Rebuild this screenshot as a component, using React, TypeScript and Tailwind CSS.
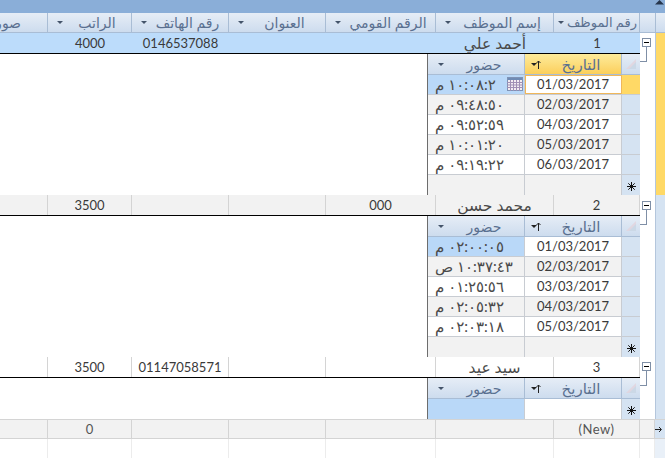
import React from "react";

const hdrCols: [number, string, boolean][] = [
  [48, "صورة", false],
  [84, "الراتب", true],
  [97, "رقم الهاتف", true],
  [97, "العنوان", true],
  [110, "الرقم القومي", true],
  [118, "إسم الموظف", true],
  [86, "رقم الموظف", true],
];

function Arrow() {
  return <span className="shrink-0 w-0 h-0 ml-[4px] border-x-[3px] border-x-transparent border-t-[3px] border-t-[#44546a]" />;
}

function SortArrow() {
  return (
    <svg width="10" height="9" viewBox="0 0 10 9" className="shrink-0 ml-[2px]">
      <path d="M0 3H6L3 6Z" fill="#222" />
      <path d="M7.5 9V1M5.5 3L7.5 1L9.5 3" fill="none" stroke="#222" />
    </svg>
  );
}

function Star() {
  return (
    <svg width="9" height="9" viewBox="0 0 9 9">
      <path d="M4.5 0V9M0 4.5H9M1.3 1.3L7.7 7.7M7.7 1.3L1.3 7.7" stroke="#111" strokeWidth="1" fill="none" />
    </svg>
  );
}

function Expander({ top }: { top: number }) {
  return (
    <div className="absolute left-[642px] w-[13px] h-[26px] pointer-events-none" style={{ top }}>
      <div className="absolute left-0 top-0 w-[9px] h-[9px] border border-[#7f8fa6] bg-white flex items-center justify-center">
        <span className="w-[5px] h-px bg-black" />
      </div>
      <div className="absolute left-[4px] top-[9px] w-px h-[15px] bg-[#7f8fa6]" />
      <div className="absolute left-[-2px] top-[23px] w-[7px] h-px bg-[#7f8fa6]" />
    </div>
  );
}

function MainRow({ id, name, nid, phone, sal, tone, selected }: { id: string; name: string; nid: string; phone: string; sal: string; tone: string; selected?: boolean }) {
  const vals = ["", sal, phone, "", nid, name, id];
  return (
    <div className="flex h-[21px] shrink-0">
      <div className={`flex flex-1 border-b border-black ${tone}`}>
        {hdrCols.map(([w], i) => (
          <div
            key={i}
            style={{ width: w }}
            className={`shrink-0 flex items-center justify-center text-[13px] leading-none text-[#3a3a3a] pt-[1px] ${selected ? "" : "border-r border-[#d4d4d4]"}`}
          >
            <span dir="auto" className={i === 5 ? "text-[15.5px] text-[#4a4a4a]" : ""}>{vals[i]}</span>
          </div>
        ))}
      </div>
      <div className="w-[15px] bg-white shrink-0" />
      <div className={`w-[10px] shrink-0 border-l border-[#b4c6dc] ${selected ? "bg-[#ffd966]" : "bg-[#d5e3f2]"}`} />
    </div>
  );
}

function SubHeader({ active }: { active: boolean }) {
  return (
    <div className="flex h-[21px] shrink-0 border-b border-[#a9bdd5]">
      <div className="w-[97px] shrink-0 flex items-center bg-gradient-to-b from-[#e6edf6] to-[#cddcee] border-r border-[#a9bdd5] pl-[6px]">
        <Arrow />
        <span className="flex-1 text-center text-[14px] text-[#5a7090]">حضور</span>
      </div>
      <div className={`w-[97px] shrink-0 flex items-center pl-[4px] border-r border-[#a9bdd5] bg-gradient-to-b ${active ? "from-[#fdeb9a] to-[#fbcf5a]" : "from-[#e6edf6] to-[#cddcee]"}`}>
        <SortArrow />
        <span className="flex-1 text-center text-[15px] text-[#5a7090]">التاريخ</span>
      </div>
      <div className="flex-1 bg-gradient-to-b from-[#e6edf6] to-[#cddcee] relative overflow-hidden">
        <svg width="19" height="20" viewBox="0 0 19 20" className="absolute inset-0">
          <polygon points="14,15 4,15 14,5" fill="#e2d3dc" opacity="0.8" />
          <polygon points="14,15 7,15 14,8" fill="#cbd8e6" />
        </svg>
      </div>
    </div>
  );
}

function Cal() {
  return (
    <svg width="16" height="14" viewBox="0 0 16 14" className="absolute right-[1px] top-[2px]">
      <rect x="0.5" y="0.5" width="15" height="13" fill="#f3ecf2" stroke="#7f93b5" />
      <rect x="1" y="1" width="14" height="2" fill="#6f8bb5" />
      <path d="M0 5.5H16M0 8H16M0 10.5H16M3.5 3V14M6.5 3V14M9.5 3V14M12.5 3V14" stroke="#a08fb5" strokeWidth="1" />
    </svg>
  );
}

function SubRow({ time, date, gray, first, current }: { time: string; date: string; gray: boolean; first: boolean; current: boolean }) {
  return (
    <div className="flex h-[20px] shrink-0 border-b border-[#c8ccd2]">
      <div className={`relative w-[97px] shrink-0 flex items-center pl-[7px] border-r border-[#c8ccd2] text-[15px] tracking-[0.9px] leading-none text-[#4a4a4a] ${first ? "bg-[#b9d8f8]" : gray ? "bg-[#f2f2f2]" : "bg-white"}`}>
        <span dir="rtl">{time}</span>
        {first && current && <Cal />}
      </div>
      <div className={`w-[97px] shrink-0 flex items-center justify-center text-[13px] leading-none text-[#3a3a3a] border-r border-[#c8ccd2] ${first && current ? "bg-white outline-1 -outline-offset-1 outline-[#f0b75a]" : first ? "bg-white" : gray ? "bg-[#f2f2f2]" : "bg-white"}`}>
        {date}
      </div>
      <div className={`flex-1 ${first && current ? "bg-[#ffd966]" : "bg-[#d5e3f2]"}`} />
    </div>
  );
}

function Sub({ rows, current, tall }: { rows: [string, string][]; current?: boolean; tall: boolean }) {
  return (
    <div className="flex shrink-0">
      <div className="flex-1 bg-white" />
      <div className={`w-[213px] shrink-0 flex flex-col border-l border-[#6d6d6d] ${tall ? "h-[141px]" : "h-[41px]"}`}>
        <SubHeader active={!!current} />
        {rows.map(([t, d], i) => (
          <SubRow key={i} time={t} date={d} gray={i % 2 === 1} first={i === 0} current={!!current} />
        ))}
        <div className="flex h-[20px] shrink-0 flex-1">
          <div className={`w-[97px] border-r border-[#c8ccd2] ${tall ? "bg-[#f2f2f2]" : "bg-[#b9d8f8]"}`} />
          <div className={`w-[97px] border-r border-[#c8ccd2] ${tall ? "bg-[#f2f2f2]" : "bg-white"}`} />
          <div className="flex-1 bg-[#d5e3f2] flex items-center justify-center pt-[2px]"><Star /></div>
        </div>
      </div>
      <div className="w-[15px] bg-white shrink-0" />
      <div className={`w-[10px] shrink-0 border-l border-[#b4c6dc] ${current ? "bg-[#ffd966]" : "bg-[#d5e3f2]"}`} />
    </div>
  );
}

const s1: [string, string][] = [
  ["١٠:٠٨:٢ م", "01/03/2017"],
  ["٠٩:٤٨:٥٠ م", "02/03/2017"],
  ["٠٩:٥٢:٥٩ م", "04/03/2017"],
  ["١٠:٠١:٢٠ م", "05/03/2017"],
  ["٠٩:١٩:٢٢ م", "06/03/2017"],
];
const s2: [string, string][] = [
  ["٠٢:٠٠:٠٥ م", "01/03/2017"],
  ["١٠:٣٧:٤٣ ص", "02/03/2017"],
  ["٠١:٢٥:٥٦ م", "03/03/2017"],
  ["٠٢:٠٥:٣٢ م", "04/03/2017"],
  ["٠٢:٠٣:١٨ م", "05/03/2017"],
];

export default function App() {
  return (
    <div className="relative w-[665px] h-[458px] overflow-hidden bg-white flex flex-col font-['Lato','DejaVu_Sans',sans-serif]">
      <div className="h-[13px] shrink-0 bg-[#8aaed8] flex justify-end items-start">
        <svg width="9" height="5" viewBox="0 0 9 5" className="mr-[1px]"><path d="M0 4.5L4.5 0L9 4.5Z" fill="#26364d" /></svg>
      </div>
      <div className="flex h-[20px] shrink-0 border-b border-[#a9bdd5]">
        <div className="flex flex-1">
          {hdrCols.map(([w, t, arrow], i) => (
            <div key={i} style={{ width: w }} className={`shrink-0 flex items-center overflow-hidden justify-end bg-gradient-to-b from-[#e6edf6] to-[#cddcee] border-r border-[#a9bdd5] ${i === 6 ? "pl-[1px]" : arrow ? "pl-[5px]" : "pr-[26px]"}`}>
              {arrow && <Arrow />}
              <span dir="rtl" className={`leading-normal whitespace-nowrap text-[#5a7090] ${i === 6 ? "text-[13px] shrink-0 pr-[2px] pl-[3px]" : "text-[14px]"} ${arrow && i !== 6 ? "flex-1 text-center" : "shrink-0"}`}>{t}</span>
            </div>
          ))}
        </div>
        <div className="w-[15px] shrink-0 bg-gradient-to-b from-[#e6edf6] to-[#cddcee]" />
        <div className="w-[10px] shrink-0 bg-gradient-to-b from-[#e6edf6] to-[#cddcee] border-l border-[#a9bdd5]" />
      </div>

      <MainRow id="1" name="أحمد علي" nid="" phone="0146537088" sal="4000" tone="bg-[#bcdcfb]" selected />
      <Sub rows={s1} current tall />
      <MainRow id="2" name="محمد حسن" nid="000" phone="" sal="3500" tone="bg-[#f2f2f2]" />
      <Sub rows={s2} tall />
      <MainRow id="3" name="سيد عيد" nid="" phone="01147058571" sal="3500" tone="bg-white" />
      <Sub rows={[]} tall={false} />

      <div className="flex h-[20px] shrink-0 border-y border-[#d4d4d4] bg-[#f2f2f2]">
        {hdrCols.map(([w], i) => (
          <div key={i} style={{ width: w }} className="shrink-0 flex items-center justify-center border-r border-[#d4d4d4] text-[13px] leading-none text-[#555]">
            {i === 1 && "0"}
            {i === 6 && <span className="tracking-[0.5px]">(New)</span>}
          </div>
        ))}
        <div className="w-[15px] shrink-0 border-r border-[#d4d4d4]" />
        <div className="w-[10px] shrink-0 bg-[#d5e3f2] flex items-center overflow-hidden">
          <svg width="8" height="7" viewBox="0 0 8 7"><path d="M0 3.5H6M4 1L6.5 3.5L4 6" fill="none" stroke="#222" /></svg>
        </div>
      </div>
      <div className="flex flex-1">
        {hdrCols.map(([w], i) => (
          <div key={i} style={{ width: w }} className="shrink-0 border-r border-[#ececec]" />
        ))}
        <div className="w-[15px] shrink-0 border-r border-[#ececec]" />
        <div className="w-[10px] shrink-0 bg-[#e9f0f8]" />
      </div>

      <Expander top={38} />
      <Expander top={201} />
      <Expander top={362} />
    </div>
  );
}
